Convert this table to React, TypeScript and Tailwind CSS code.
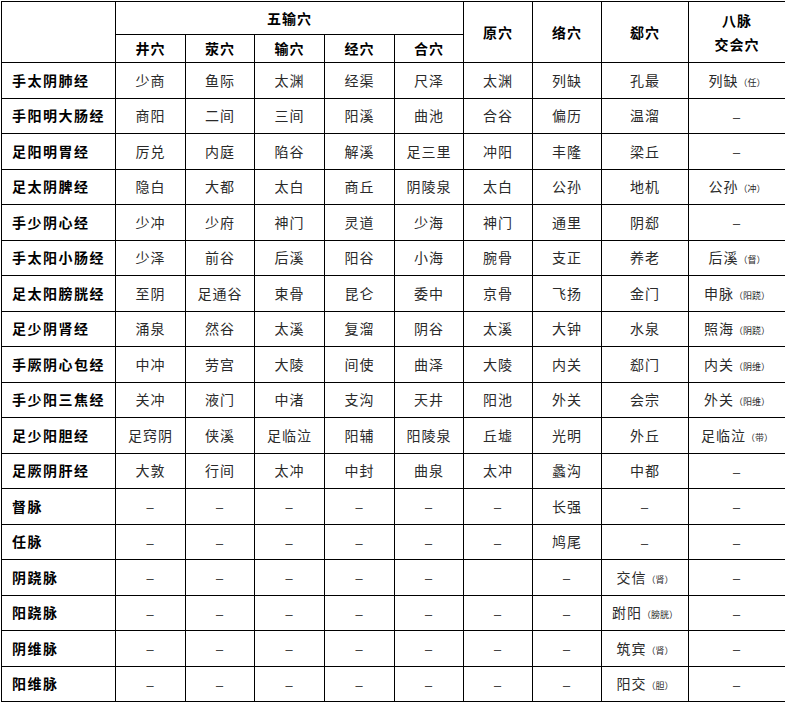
const D = '–';

type Row = { name: string; cells: string[]; extra?: [string, string] };

const rows: Row[] = [
  { name: '手太阴肺经', cells: ['少商', '鱼际', '太渊', '经渠', '尺泽', '太渊', '列缺', '孔最'], extra: ['列缺', '任'] },
  { name: '手阳明大肠经', cells: ['商阳', '二间', '三间', '阳溪', '曲池', '合谷', '偏历', '温溜', D] },
  { name: '足阳明胃经', cells: ['厉兑', '内庭', '陷谷', '解溪', '足三里', '冲阳', '丰隆', '梁丘', D] },
  { name: '足太阴脾经', cells: ['隐白', '大都', '太白', '商丘', '阴陵泉', '太白', '公孙', '地机'], extra: ['公孙', '冲'] },
  { name: '手少阴心经', cells: ['少冲', '少府', '神门', '灵道', '少海', '神门', '通里', '阴郄', D] },
  { name: '手太阳小肠经', cells: ['少泽', '前谷', '后溪', '阳谷', '小海', '腕骨', '支正', '养老'], extra: ['后溪', '督'] },
  { name: '足太阳膀胱经', cells: ['至阴', '足通谷', '束骨', '昆仑', '委中', '京骨', '飞扬', '金门'], extra: ['申脉', '阳跷'] },
  { name: '足少阴肾经', cells: ['涌泉', '然谷', '太溪', '复溜', '阴谷', '太溪', '大钟', '水泉'], extra: ['照海', '阴跷'] },
  { name: '手厥阴心包经', cells: ['中冲', '劳宫', '大陵', '间使', '曲泽', '大陵', '内关', '郄门'], extra: ['内关', '阴维'] },
  { name: '手少阳三焦经', cells: ['关冲', '液门', '中渚', '支沟', '天井', '阳池', '外关', '会宗'], extra: ['外关', '阳维'] },
  { name: '足少阳胆经', cells: ['足窍阴', '侠溪', '足临泣', '阳辅', '阳陵泉', '丘墟', '光明', '外丘'], extra: ['足临泣', '带'] },
  { name: '足厥阴肝经', cells: ['大敦', '行间', '太冲', '中封', '曲泉', '太冲', '蠡沟', '中都', D] },
  { name: '督脉', cells: [D, D, D, D, D, D, '长强', D, D] },
  { name: '任脉', cells: [D, D, D, D, D, D, '鸠尾', D, D] },
  { name: '阴跷脉', cells: [D, D, D, D, D, '', D, '交信|肾', D] },
  { name: '阳跷脉', cells: [D, D, D, D, D, D, D, '跗阳|膀胱', D] },
  { name: '阴维脉', cells: [D, D, D, D, D, D, D, '筑宾|肾', D] },
  { name: '阳维脉', cells: [D, D, D, D, D, D, D, '阳交|胆', D] },
];

function Note({ main, sub }: { main: string; sub: string }) {
  return (
    <span>
      {main}
      <span className="text-[9px] tracking-normal">（{sub}）</span>
    </span>
  );
}

function Cell({ v }: { v: string }) {
  if (v.includes('|')) {
    const [m, s] = v.split('|');
    return (
      <td className="border border-black text-center">
        <Note main={m} sub={s} />
      </td>
    );
  }
  if (v === D) {
    return <td className="border border-black text-center text-[16px] text-[#444]">{v}</td>;
  }
  return <td className="border border-black text-center">{v}</td>;
}

export default function App() {
  return (
    <div className="w-[785px] h-[704px] bg-white pt-[1px] pl-[1px] font-['Noto_Sans_CJK_SC',sans-serif]">
      <table className="table-fixed border-collapse w-[784px] text-[14px] tracking-[1px] text-[#2a2a2a]">
        <colgroup>
          <col className="w-[114px]" />
          <col className="w-[70px]" />
          <col className="w-[69px]" />
          <col className="w-[70px]" />
          <col className="w-[70px]" />
          <col className="w-[69px]" />
          <col className="w-[69px]" />
          <col className="w-[69px]" />
          <col className="w-[87px]" />
          <col className="w-[97px]" />
        </colgroup>
        <thead className="text-black font-bold text-[14px]">
          <tr className="h-[33px]">
            <th rowSpan={2} className="border border-black"></th>
            <th colSpan={5} className="border border-black">五输穴</th>
            <th rowSpan={2} className="border border-black">原穴</th>
            <th rowSpan={2} className="border border-black">络穴</th>
            <th rowSpan={2} className="border border-black">郄穴</th>
            <th rowSpan={2} className="border border-black leading-[24px]">
              八脉
              <br />
              交会穴
            </th>
          </tr>
          <tr className="h-[28px]">
            <th className="border border-black">井穴</th>
            <th className="border border-black">荥穴</th>
            <th className="border border-black">输穴</th>
            <th className="border border-black">经穴</th>
            <th className="border border-black">合穴</th>
          </tr>
        </thead>
        <tbody>
          {rows.map((r) => (
            <tr key={r.name} className="h-[35.5px]">
              <td className="border border-black pl-[10px] font-bold text-black tracking-[1.5px]">{r.name}</td>
              {r.cells.map((c, i) => (
                <Cell key={i} v={c} />
              ))}
              {r.extra && (
                <td className="border border-black text-center">
                  <Note main={r.extra[0]} sub={r.extra[1]} />
                </td>
              )}
            </tr>
          ))}
        </tbody>
      </table>
    </div>
  );
}
